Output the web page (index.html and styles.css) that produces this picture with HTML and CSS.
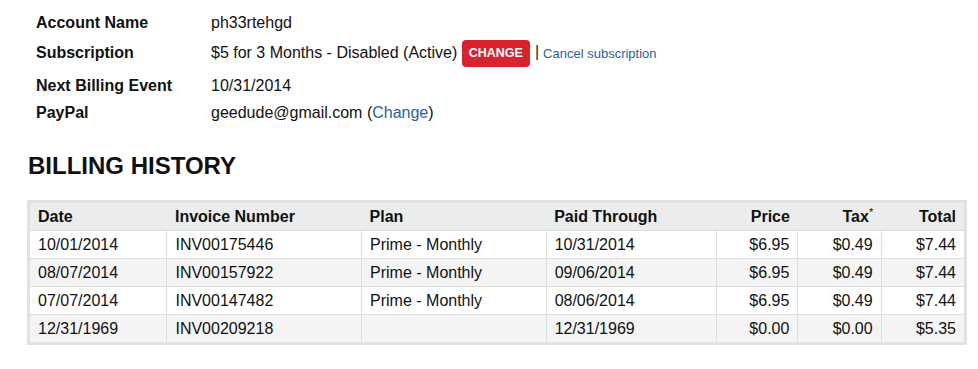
FILE: index.html
```html
<!DOCTYPE html>
<html lang="en">
<head>
  <meta charset="UTF-8" />
  <title>Account</title>
  <link rel="stylesheet" href="styles.css">
</head>
<body>
  <div class="page">
    <!-- Account details -->
    <div class="details">
      <div class="label">Account Name</div>
      <div class="value">ph33rtehgd</div>

      <div class="label">Subscription</div>
      <div class="value">$5 for 3 Months - Disabled (Active) <a href="#" class="change-btn">CHANGE</a><span class="sep">|</span><a href="#" class="small-link">Cancel subscription</a></div>

      <div class="label">Next Billing Event</div>
      <div class="value">10/31/2014</div>

      <div class="label">PayPal</div>
      <div class="value">geedude@gmail.com (<a href="#">Change</a>)</div>
    </div>

    <h2>BILLING HISTORY</h2>

    <table class="history">
      <colgroup>
        <col style="width: 138px">
        <col style="width: 194px">
        <col style="width: 184px">
        <col style="width: 170px">
        <col style="width: 81px">
        <col style="width: 83px">
        <col style="width: 84px">
      </colgroup>
      <thead>
        <tr>
          <th>Date</th>
          <th>Invoice Number</th>
          <th>Plan</th>
          <th>Paid Through</th>
          <th class="num">Price</th>
          <th class="num">Tax<sup>*</sup></th>
          <th class="num">Total</th>
        </tr>
      </thead>
      <tbody>
        <tr>
          <td>10/01/2014</td>
          <td>INV00175446</td>
          <td>Prime - Monthly</td>
          <td>10/31/2014</td>
          <td class="num">$6.95</td>
          <td class="num">$0.49</td>
          <td class="num">$7.44</td>
        </tr>
        <tr>
          <td>08/07/2014</td>
          <td>INV00157922</td>
          <td>Prime - Monthly</td>
          <td>09/06/2014</td>
          <td class="num">$6.95</td>
          <td class="num">$0.49</td>
          <td class="num">$7.44</td>
        </tr>
        <tr>
          <td>07/07/2014</td>
          <td>INV00147482</td>
          <td>Prime - Monthly</td>
          <td>08/06/2014</td>
          <td class="num">$6.95</td>
          <td class="num">$0.49</td>
          <td class="num">$7.44</td>
        </tr>
        <tr>
          <td>12/31/1969</td>
          <td>INV00209218</td>
          <td></td>
          <td>12/31/1969</td>
          <td class="num">$0.00</td>
          <td class="num">$0.00</td>
          <td class="num">$5.35</td>
        </tr>
      </tbody>
    </table>
  </div>
</body>
</html>
```

FILE: styles.css
```css
body {
  margin: 0;
  font-family: "Liberation Sans", Arial, sans-serif;
  font-size: 16px;
  color: #111;
  background: #fff;
}
a {
  color: #2a5f9e;
  text-decoration: none;
}
.page {
  width: 940px;
  padding: 8px 0 0 27px;
}
.details {
  display: grid;
  grid-template-columns: 175px auto;
  grid-template-rows: 30px 30px 36px 18px;
  align-items: center;
  padding-left: 9px;
}
.label {
  font-weight: bold;
}
.value {
  white-space: nowrap;
}
.change-btn {
  display: inline-block;
  vertical-align: middle;
  padding: 0 7px;
  height: 27px;
  line-height: 27px;
  background: #d7232e;
  color: #fff;
  font-size: 12.5px;
  font-weight: bold;
  border-radius: 4px;
}
.sep {
  margin: 0 4px 0 5px;
  color: #222;
}
.small-link {
  font-size: 13px;
}
h2 {
  margin: 30px 0 20px 1px;
  font-size: 24px;
  line-height: 28px;
  color: #111;
}
.history {
  border-collapse: collapse;
  table-layout: fixed;
  width: 940px;
  border: 3px solid #e1e1e1;
}
.history th {
  background: #ebecec;
  text-align: left;
  padding: 4px 8px 3px;
  line-height: 20px;
  font-weight: bold;
}
.history td {
  padding: 4px 8px;
  line-height: 19px;
  border: 1px solid #dddddd;
}
.history tbody tr:nth-child(even) td {
  background: #f4f4f4;
}
.history .num {
  text-align: right;
}
.history sup {
  font-size: 11px;
  font-weight: normal;
  line-height: 0;
}
```
